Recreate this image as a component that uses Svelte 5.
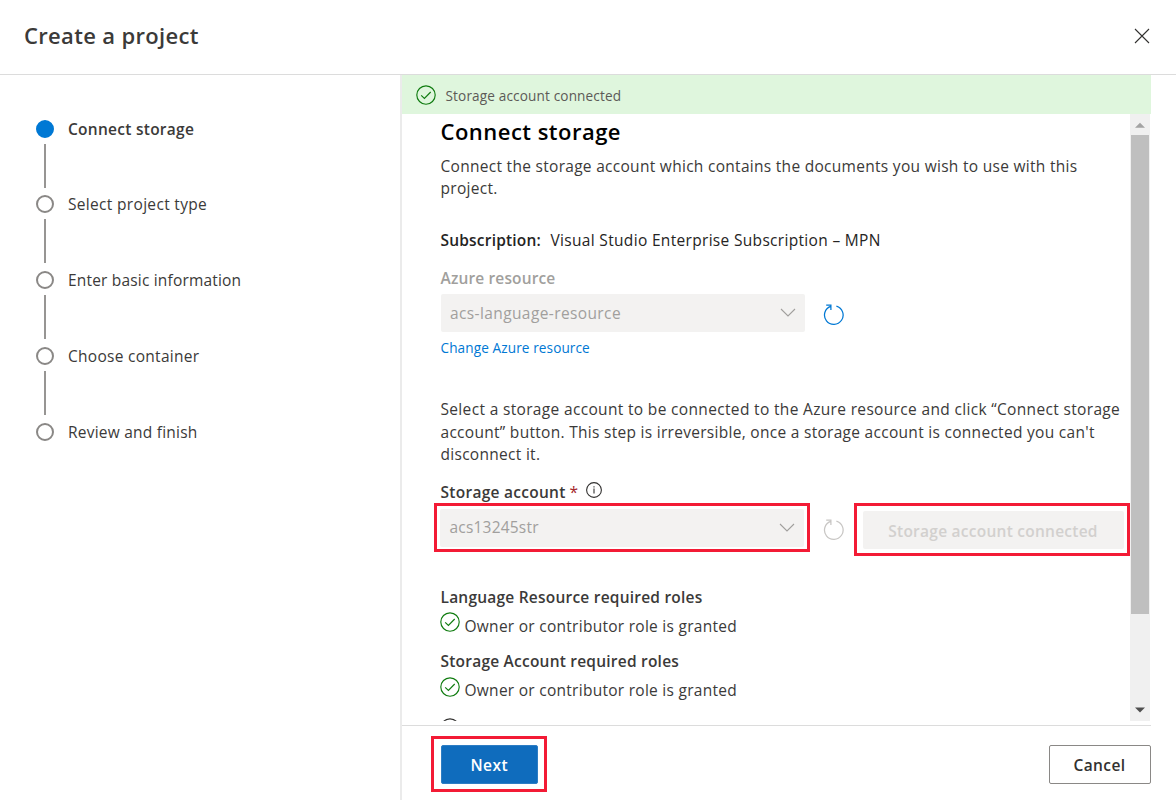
<script>
  const steps = [
    { label: 'Connect storage', active: true, spacing: 0.27 },
    { label: 'Select project type', spacing: 0.32 },
    { label: 'Enter basic information', spacing: 0.18 },
    { label: 'Choose container', spacing: 0.28 },
    { label: 'Review and finish', spacing: 0.22 }
  ];
  const roles = ['Language Resource required roles', 'Storage Account required roles'];
</script>

{#snippet check()}
  <svg class="check" width="20" height="20" viewBox="0 0 20 20" fill="none" stroke="#107c10">
    <circle cx="10" cy="10" r="9.2" stroke-width="1.15" />
    <path d="M5.2 10.4 8.4 13.4 14.7 7" stroke-width="1.15" />
  </svg>
{/snippet}

{#snippet refresh(color)}
  <svg class="refresh" width="22" height="22" viewBox="0 0 22 22" fill="none" stroke={color} stroke-width="1.25">
    <path d="M13.4 2.1A9.3 9.3 0 1 1 7.6 2.3M3.2 1.2H7.9V5.9" />
  </svg>
{/snippet}

{#snippet chevron()}
  <svg width="16" height="10" viewBox="0 0 16 10" fill="none" stroke="#a19f9d" stroke-width="1.1">
    <path d="M1 1 8 8 15 1" />
  </svg>
{/snippet}

<div class="dialog">
  <header>
    <h1>Create a project</h1>
    <svg width="16" height="16" viewBox="0 0 16 16" stroke="#323130" stroke-width="1.1">
      <path d="M1 1 15 15M15 1 1 15" />
    </svg>
  </header>
  <div class="body">
    <nav>
      {#each steps as step, i}
        <div class="step" class:active={step.active}>
          <div class="rail">
            <span class="dot"></span>
            {#if i < steps.length - 1}<span class="line"></span>{/if}
          </div>
          <span class="label" style="letter-spacing: {step.spacing}px">{step.label}</span>
        </div>
      {/each}
    </nav>
    <main>
      <div class="alert">{@render check()}<span>Storage account connected</span></div>
      <div class="scroll">
        <div class="content">
          <h2>Connect storage</h2>
          <p class="intro">Connect the storage account which contains the documents you wish to use with this<br />project.</p>
          <div class="sub"><b>Subscription:</b><span>Visual Studio Enterprise Subscription – MPN</span></div>
          <div class="lab muted">Azure resource</div>
          <div class="row">
            <div class="select"><span class="v1">acs-language-resource</span>{@render chevron()}</div>
            {@render refresh('#0078d4')}
          </div>
          <div class="link"><span>Change Azure resource</span></div>
          <p class="select-info"><span class="l1">Select a storage account to be connected to the Azure resource and click “Connect storage</span><br /><span class="l2">account” button. This step is irreversible, once a storage account is connected you can't</span><br />disconnect it.</p>
          <div class="lab storage">
            <span>Storage account</span><i>*</i>
            <svg width="16" height="16" viewBox="0 0 16 16" fill="none" stroke="#323130">
              <circle cx="8" cy="8" r="7.4" stroke-width="1.1" />
              <path d="M8 6.5V11.5M8 4.3V5.6" stroke-width="1.1" />
            </svg>
          </div>
          <div class="row second">
            <div class="mark m1"><div class="select"><span class="v2">acs13245str</span>{@render chevron()}</div></div>
            {@render refresh('#c8c6c4')}
            <div class="mark m2"><div class="connected">Storage account connected</div></div>
          </div>
          {#each roles as role, i}
            <div class="role" class:later={i > 0}>
              <div class="role-title">{role}</div>
              <div class="granted">{@render check()}<span>Owner or contributor role is granted</span></div>
            </div>
          {/each}
          <svg class="cut" width="20" height="20" viewBox="0 0 20 20" fill="none" stroke="#323130"><circle cx="10" cy="10" r="9.2" stroke-width="1.2" /></svg>
        </div>
        <div class="bar">
          <svg width="20" height="21" viewBox="0 0 20 21"><path d="M5 13.7 10 8.7 15 13.7Z" fill="#a3a3a3" /></svg>
          <div class="thumb"></div>
          <svg width="20" height="21" viewBox="0 0 20 21"><path d="M5 7.5H15L10 12.5Z" fill="#505050" /></svg>
        </div>
      </div>
      <footer>
        <div class="mark m3"><button class="next">Next</button></div>
        <button class="cancel">Cancel</button>
      </footer>
    </main>
  </div>
</div>

<style>
  :global(body) { margin: 0; overflow: hidden; background: #fff; }
  * { box-sizing: border-box; }
  svg { display: block; flex: none; }
  .dialog {
    width: 1176px; height: 800px; display: flex; flex-direction: column;
    font-family: 'Open Sans', 'Noto Sans', sans-serif; font-size: 15.5px; font-weight: 400; color: #3b3a39; white-space: nowrap; overflow: hidden;
  }
  header { height: 75px; flex: none; border-bottom: 1px solid #dcdcdc; display: flex; justify-content: space-between; align-items: flex-start; padding: 20px 26px 0 24px; }
  header svg { margin-top: 8px; }
  h1 { margin: 0; font-size: 22px; line-height: 30px; font-weight: 600; letter-spacing: .33px; }
  .body { display: flex; flex: 1; min-height: 0; }
  nav { width: 402px; flex: none; border-right: 2px solid #ebebeb; padding: 44.6px 0 0 36px; }
  .step { display: flex; height: 75.9px; gap: 14px; }
  .rail { width: 18px; display: flex; flex-direction: column; align-items: center; }
  .dot { width: 18px; height: 18px; border: 2px solid #8a8886; border-radius: 50%; flex: none; }
  .active .dot { background: #0078d4; border-color: #0078d4; }
  .line { width: 2px; height: 44px; margin-top: 6px; background: #979593; }
  .label { line-height: 18px; }
  .active .label { font-weight: 600; }
  main { width: 748.5px; display: flex; flex-direction: column; }
  .alert { height: 39px; flex: none; background: #dff6dd; display: flex; align-items: center; padding-left: 14px; gap: 9.5px; font-size: 13.6px; color: #5c5a57; letter-spacing: .14px; }
  .alert span { padding-top: 2px; }
  .scroll { height: 607px; display: flex; overflow: hidden; flex: none; }
  .content { width: 728px; padding-left: 38.5px; flex: none; }
  h2 { margin: 0; font-size: 22px; line-height: 35px; font-weight: 600; color: #000; letter-spacing: .48px; }
  p { margin: 0; line-height: 22.5px; letter-spacing: .29px; }
  .intro { margin-top: 5.5px; }
  .sub { margin-top: 28.5px; line-height: 24px; display: flex; gap: 9.5px; color: #252423; }
  .sub b { letter-spacing: .2px; }
  .sub span { letter-spacing: .32px; }
  b, .lab, .role-title { font-weight: 600; }
  .lab { line-height: 22px; }
  .muted { margin-top: 15px; color: #a19f9d; letter-spacing: .14px; }
  .row { display: flex; align-items: center; margin-top: 5px; }
  .select { width: 364px; height: 38px; border-radius: 2px; background: #f3f2f1; color: #a19f9d; display: flex; align-items: center; justify-content: space-between; padding: 0 9px 0 9.5px; }
  .v1 { letter-spacing: .39px; }
  .v2 { letter-spacing: .2px; margin-top: -1px; }
  .row .refresh { margin: 3px 0 0 18px; }
  .link { font-size: 13.6px; line-height: 20px; color: #0078d4; margin-top: 6px; letter-spacing: .1px; }
  .select-info { margin-top: 40px; }
  .l1 { letter-spacing: .335px; }
  .storage { margin-top: 15px; display: flex; letter-spacing: .27px; }
  .storage i { font-style: normal; color: #a4262c; margin: 0 8px 0 4px; font-weight: 400; }
  .storage svg { margin-top: 1px; }
  .mark { border: 3px solid #f31b35; display: flex; flex: none; }
  .m1 { width: 376px; height: 49px; padding: 3px; margin-left: -6.5px; }
  .second { margin-top: 0; align-items: flex-start; }
  .second .refresh { margin: 16px 9px 0 12.5px; }
  .m2 { width: 276px; height: 53px; padding: 5px 3px 4px 6px; }
  .connected { width: 261px; height: 38px; border-radius: 2px; background: #f3f2f1; color: #d2d0ce; font-weight: 600; letter-spacing: .25px; display: flex; align-items: center; justify-content: center; padding-top: 2px; }
  .role { margin-top: 30px; letter-spacing: .27px; }
  .role.later { margin-top: 12.5px; }
  .role-title { line-height: 22px; letter-spacing: .22px; }
  .granted { display: flex; gap: 4.5px; margin: 4px 0 0 -.5px; height: 26px; }
  .granted span { line-height: 28px; }
  .granted .check { margin-top: .5px; }
  .cut { margin: 16px 0 0 -1px; }
  .bar { width: 20px; background: #f0f0f0; display: flex; flex-direction: column; justify-content: space-between; align-items: center; }
  .thumb { width: 18px; height: 479px; background: #bfbfbf; margin-bottom: auto; }
  footer { margin-top: 4px; flex: 1; border-top: 1px solid #dcdcdc; display: flex; justify-content: space-between; align-items: flex-start; padding: 10px 0 0 29px; }
  .m3 { width: 116px; height: 56px; padding: 6px 6px 6px 6.5px; }
  button { font: inherit; font-weight: 600; padding: 0; border-radius: 2px; letter-spacing: .4px; }
  .next { width: 97.5px; height: 39px; background: #0f6cbd; color: #fff; border: 1px solid #2d7dc4; }
  .cancel { width: 102px; height: 39px; margin-top: 9px; background: #fff; border: 1px solid #8a8886; color: #323130; }
</style>
